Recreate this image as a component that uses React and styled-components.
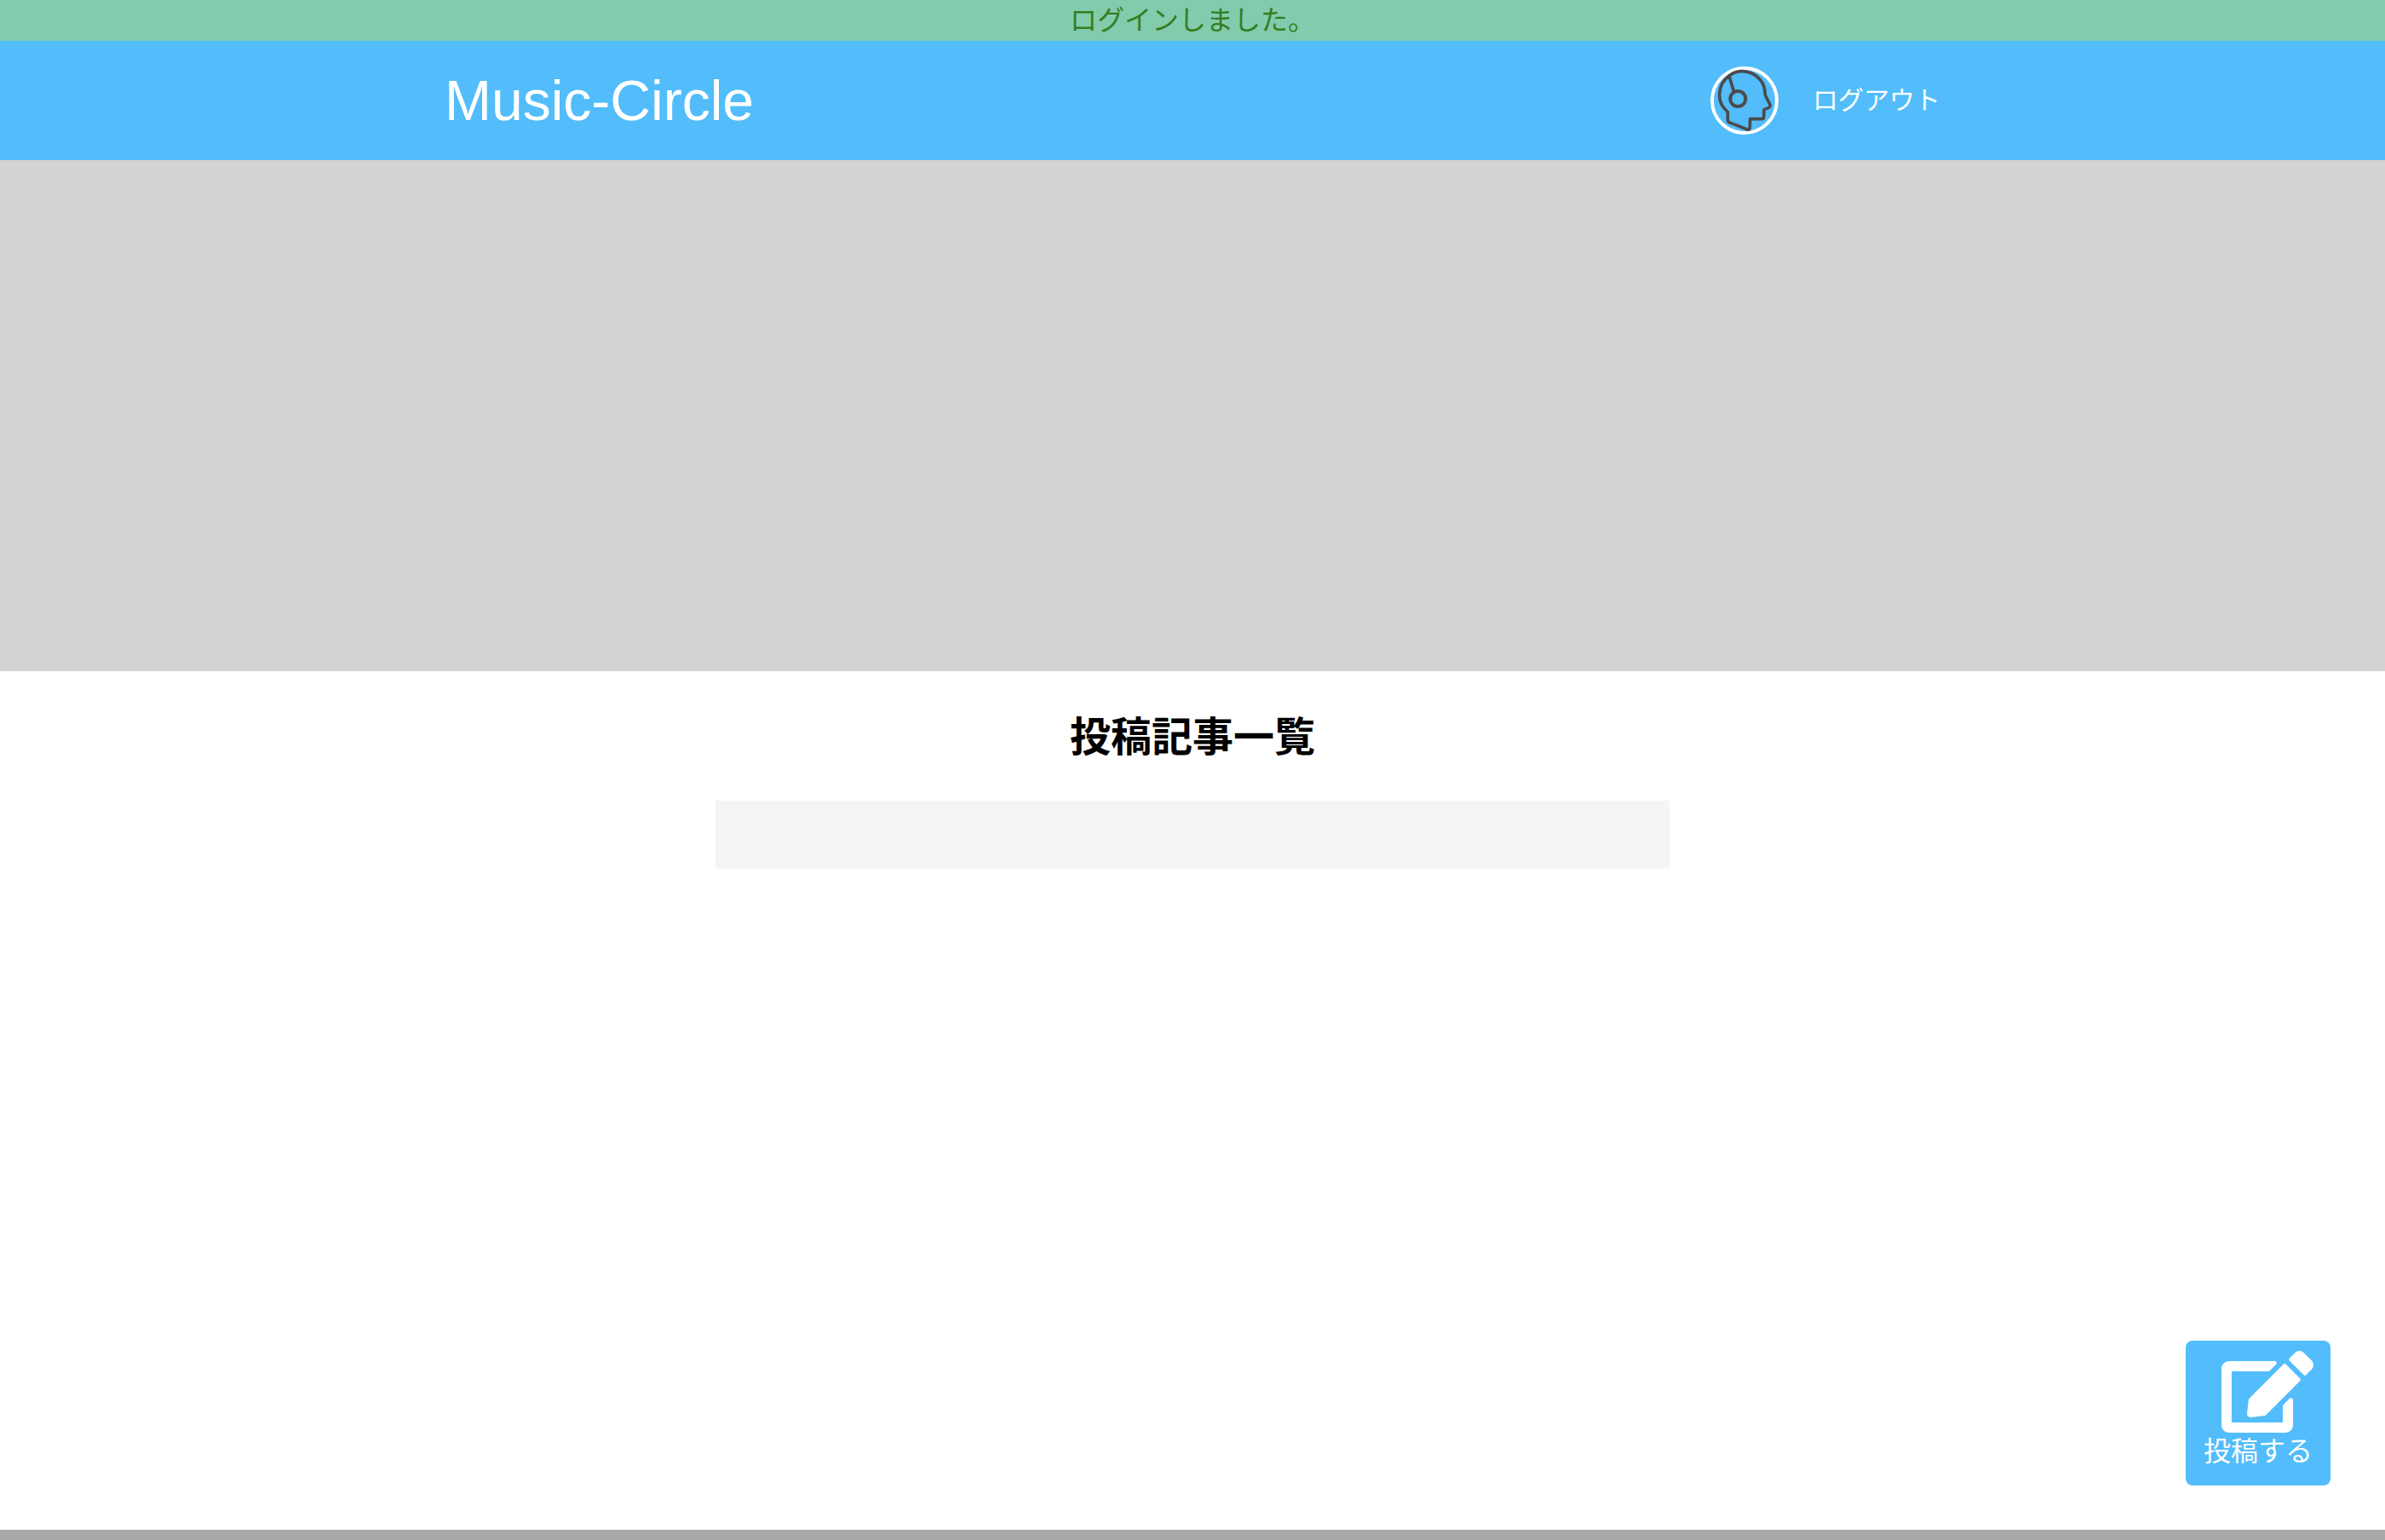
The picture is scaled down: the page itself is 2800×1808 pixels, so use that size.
import React from "react";
import styled, { createGlobalStyle } from "styled-components";
import { FaEdit } from "react-icons/fa";

const SKY = "#52bdfa";

const GlobalStyle = createGlobalStyle`
  *, *::before, *::after { box-sizing: border-box; }
  body {
    margin: 0;
    background: #ffffff;
    color: #000000;
    font-family: "Liberation Sans", "Noto Sans CJK JP", sans-serif;
    font-size: 32px;
  }
`;

const Page = styled.div`
  display: flex;
  flex-direction: column;
  min-height: 100vh;
`;

const Flash = styled.p`
  margin: 0;
  background: #82cbad;
  color: #347d21;
  line-height: 48px;
  text-align: center;
`;

const Header = styled.header`
  display: flex;
  justify-content: center;
  padding: 0 40px;
  background: ${SKY};
`;

const HeaderInner = styled.div`
  display: flex;
  align-items: center;
  justify-content: space-between;
  width: 100%;
  max-width: 1756px;
  min-height: 140px;
`;

const Brand = styled.a`
  color: #ffffff;
  font-size: 66px;
  line-height: 78px;
  text-decoration: none;
`;

const Nav = styled.nav`
  display: flex;
  align-items: center;
  gap: 40px;
`;

const AvatarLink = styled.a`
  display: block;
  width: 80px;
  height: 80px;
  border-radius: 50%;

  svg { display: block; width: 100%; height: 100%; }
`;

const LogoutLink = styled.a`
  color: #ffffff;
  font-size: 30px;
  line-height: 48px;
  text-decoration: none;
`;

const Hero = styled.section`
  height: 600px;
  background: #d3d3d3;
`;

const Main = styled.main`
  flex: 1;
  display: flex;
  flex-direction: column;
  align-items: center;
  gap: 38px;
  padding: 42px 0;
`;

const Title = styled.h1`
  margin: 0;
  font-size: 48px;
  line-height: 72px;
  font-weight: 700;
`;

const ArticleList = styled.section`
  width: 40%;
  min-height: 80px;
  background: #f5f5f5;
`;

const PostLink = styled.a`
  position: fixed;
  right: 64px;
  bottom: 64px;
  display: flex;
  flex-direction: column;
  align-items: center;
  width: 170px;
  height: 170px;
  padding-top: 12px;
  border-radius: 8px;
  background: ${SKY};
  color: #ffffff;
  line-height: 44px;
  text-decoration: none;

  svg { display: block; width: 130px; height: 96px; padding-left: 22px; }
`;

const Footer = styled.footer`
  height: 12px;
  background: #a9a9a9;
`;

function Avatar() {
  return (
    <svg viewBox="0 0 240 240" fill="none" aria-hidden="true">
      <circle cx="120" cy="120" r="114" stroke="#ffffff" strokeWidth="12" />
      <g stroke="#4b4b4d" strokeWidth="11" strokeLinejoin="round" strokeLinecap="round">
        <path d="M66 33 C82 20 99 16 115 17 C156 20 190 49 192 89 C192 100 194 104 197 109 L208 130 C212 138 211 143 204 146 L189 152 L188 177 C188 182 186 185 181 185 L140 185 L139 213 C139 222 136 224 128 221 L69 198 C63 196 61 193 61 188 L61 160 C42 144 31 124 32 97 C33 69 45 48 66 33 Z" />
        <path d="M66 33 L82 86" />
        <circle cx="97" cy="114" r="27" strokeWidth="12" />
      </g>
    </svg>
  );
}

export default function App() {
  return (
    <Page>
      <GlobalStyle />
      <Flash role="status">ログインしました。</Flash>
      <Header>
        <HeaderInner>
          <Brand href="#">Music-Circle</Brand>
          <Nav>
            <AvatarLink href="#" aria-label="マイページ">
              <Avatar />
            </AvatarLink>
            <LogoutLink href="#">ログアウト</LogoutLink>
          </Nav>
        </HeaderInner>
      </Header>
      <Hero />
      <Main>
        <Title>投稿記事一覧</Title>
        <ArticleList />
      </Main>
      <PostLink href="#">
        <FaEdit aria-hidden="true" />
        投稿する
      </PostLink>
      <Footer />
    </Page>
  );
}
